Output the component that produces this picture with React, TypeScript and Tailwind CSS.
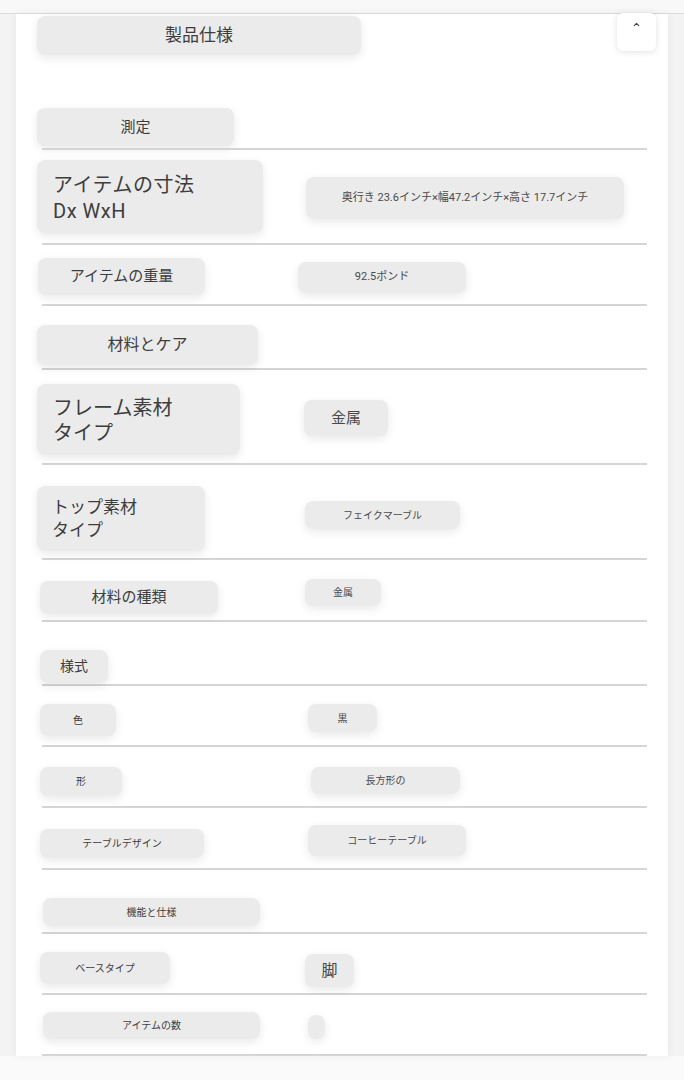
import { ChevronUp } from "lucide-react";

type Row = {
  h: string;
  label: string[];
  labelCls: string;
  value?: string;
  valueCls?: string;
};

const box = "flex items-center rounded-lg bg-[#ebebeb] shadow-[0_3px_10px_rgba(0,0,0,0.09)] text-[#3d3d3d]";

const rows: Row[] = [
  {
    h: "h-[93px]",
    label: ["アイテムの寸法", "Dx WxH"],
    labelCls: "mt-[10px] w-[226px] h-[73px] px-[16px] text-[20px] leading-[26px] tracking-[0.5px] pt-[2px]",
    value: "奥行き 23.6インチ×幅47.2インチ×高さ 17.7インチ",
    valueCls: "mt-[27px] ml-[1px] w-[318px] h-[42px] justify-center text-[11px]",
  },
  {
    h: "h-[59px]",
    label: ["アイテムの重量"],
    labelCls: "mt-[13px] ml-[1px] w-[167px] h-[37px] justify-center text-[15px]",
    value: "92.5ポンド",
    valueCls: "mt-[17px] ml-[-7px] w-[168px] h-[31px] justify-center text-[11px]",
  },
  {
    h: "h-[62px]",
    label: ["材料とケア"],
    labelCls: "mt-[19px] w-[221px] h-[40px] justify-center text-[16px]",
  },
  {
    h: "h-[93px]",
    label: ["フレーム素材", "タイプ"],
    labelCls: "mt-[14px] w-[203px] h-[71px] px-[16px] text-[20px] leading-[25px] pt-[2px]",
    value: "金属",
    valueCls: "mt-[30px] ml-[-1px] w-[84px] h-[36px] justify-center text-[15px]",
  },
  {
    h: "h-[93px]",
    label: ["トップ素材", "タイプ"],
    labelCls: "mt-[21px] w-[168px] h-[65px] px-[15px] text-[17px] leading-[23px] items-start pt-[10px]",
    value: "フェイクマーブル",
    valueCls: "mt-[36px] w-[155px] h-[28px] justify-center text-[10px]",
  },
  {
    h: "h-[60px]",
    label: ["材料の種類"],
    labelCls: "mt-[21px] ml-[3px] w-[178px] h-[33px] justify-center text-[15px]",
    value: "金属",
    valueCls: "mt-[19px] w-[76px] h-[27px] justify-center text-[10px]",
  },
  {
    h: "h-[62px]",
    label: ["様式"],
    labelCls: "mt-[28px] ml-[3px] w-[68px] h-[33px] justify-center text-[14px]",
  },
  {
    h: "h-[59px]",
    label: ["色"],
    labelCls: "mt-[18px] ml-[3px] w-[76px] h-[32px] justify-center text-[10px]",
    value: "黒",
    valueCls: "mt-[18px] ml-[3px] w-[69px] h-[28px] justify-center text-[10px]",
  },
  {
    h: "h-[59px]",
    label: ["形"],
    labelCls: "mt-[20px] ml-[3px] w-[82px] h-[29px] justify-center text-[10px]",
    value: "長方形の",
    valueCls: "mt-[20px] ml-[6px] w-[149px] h-[27px] justify-center text-[10px]",
  },
  {
    h: "h-[60px]",
    label: ["テーブルデザイン"],
    labelCls: "mt-[21px] ml-[3px] w-[164px] h-[29px] justify-center text-[10px]",
    value: "コーヒーテーブル",
    valueCls: "mt-[17px] ml-[3px] w-[158px] h-[31px] justify-center text-[10px]",
  },
  {
    h: "h-[62px]",
    label: ["機能と仕様"],
    labelCls: "mt-[28px] ml-[6px] w-[217px] h-[28px] justify-center text-[10px]",
  },
  {
    h: "h-[59px]",
    label: ["ベースタイプ"],
    labelCls: "mt-[18px] ml-[3px] w-[130px] h-[32px] justify-center text-[10px]",
    value: "脚",
    valueCls: "mt-[20px] w-[49px] h-[33px] justify-center text-[16px]",
  },
  {
    h: "h-[59px]",
    label: ["アイテムの数"],
    labelCls: "mt-[17px] ml-[6px] w-[217px] h-[27px] justify-center text-[10px]",
    value: "",
    valueCls: "mt-[20px] ml-[3px] w-[17px] h-[24px]",
  },
];

const Line = () => <div className="ml-[26px] mr-[21px] h-[2px] bg-[#d5d5d5]" />;

export default function App() {
  return (
    <div
      className="min-h-[1080px] flex flex-col bg-[#f3f3f3] text-[#3d3d3d]"
      style={{ fontFamily: 'Roboto, "Noto Sans CJK JP", sans-serif' }}
    >
      <div className="h-[14px] bg-[#f8f8f8] border-b border-[#dcdcdc]" />
      <div className="mx-[16px] bg-white shadow-[0_0_8px_rgba(0,0,0,0.06)] relative">
        <button className="absolute right-[12px] top-[-1px] w-[39px] h-[38px] rounded-md bg-white shadow-[0_1px_6px_rgba(0,0,0,0.12)] flex justify-center pt-[7px]">
          <ChevronUp className="w-[9px] h-[9px] text-[#444]" strokeWidth={3} />
        </button>
        <div className="pl-[21px]">
          <div className={`${box} mt-[2px] w-[324px] h-[39px] justify-center text-[17px]`}>製品仕様</div>
          <div className={`${box} mt-[53px] mb-[2px] w-[197px] h-[38px] justify-center text-[15px]`}>測定</div>
        </div>
        <Line />
        {rows.map((r, i) => (
          <div key={i}>
            <div className={`${r.h} flex items-start pl-[21px]`}>
              <div className="w-[268px] shrink-0">
                <div className={`${box} ${r.labelCls}`}>
                  <div>
                    {r.label.map((t) => (
                      <div key={t}>{t}</div>
                    ))}
                  </div>
                </div>
              </div>
              {r.value !== undefined && (
                <div className={`${box} ${r.valueCls} text-[#4a4a4a]`}>{r.value}</div>
              )}
            </div>
            <Line />
          </div>
        ))}
      </div>
      <div className="flex-1 bg-[#fafafa]" />
    </div>
  );
}
